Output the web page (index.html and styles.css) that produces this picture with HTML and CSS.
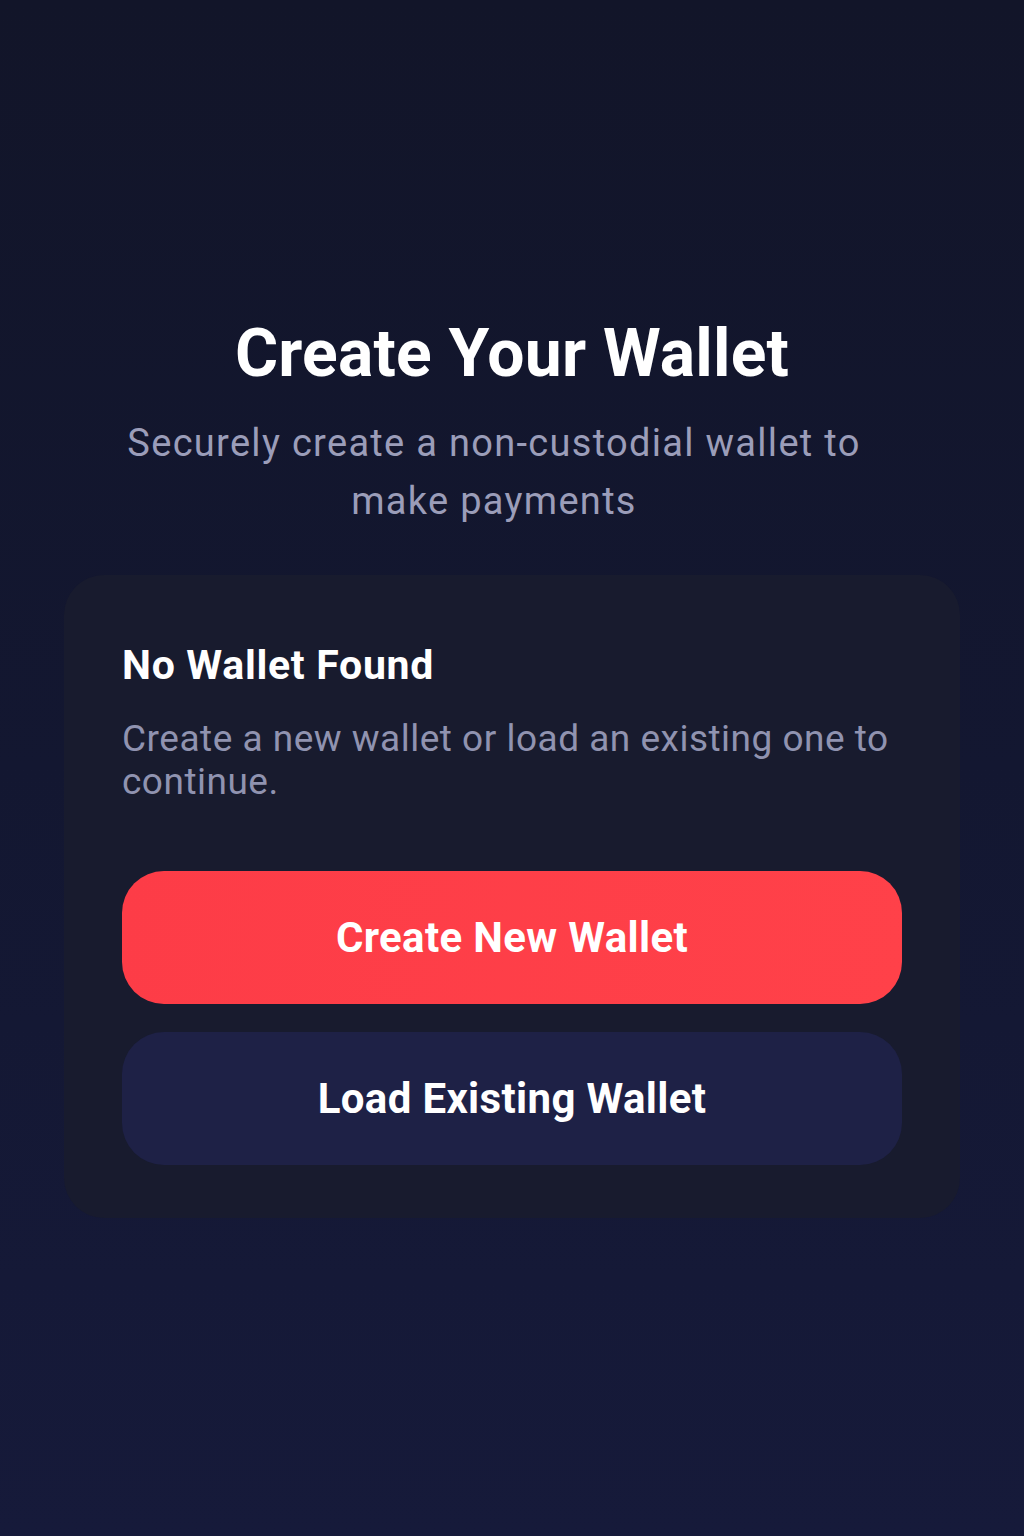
FILE: index.html
```html
<!DOCTYPE html>
<html lang="en">
<head>
<meta charset="utf-8">
<title>Create Your Wallet</title>
<link rel="stylesheet" href="styles.css">
</head>
<body>
<main class="screen">
  <header class="intro">
    <h1 class="title">Create Your Wallet</h1>
    <p class="subtitle">Securely create a non-custodial wallet to make payments</p>
  </header>
  <section class="card">
    <h2 class="card-title">No Wallet Found</h2>
    <p class="card-text">Create a new wallet or load an existing one to continue.</p>
    <div class="actions">
      <button class="btn btn-primary" type="button">Create New Wallet</button>
      <button class="btn btn-secondary" type="button">Load Existing Wallet</button>
    </div>
  </section>
</main>
</body>
</html>
```
FILE: styles.css
```css
html, body {
  margin: 0;
  padding: 0;
}
body {
  min-height: 1536px;
  background: linear-gradient(180deg, #121529 0%, #131731 50%, #161a3a 100%);
  font-family: Roboto, "Noto Sans", "Liberation Sans", sans-serif;
  color: #ffffff;
}
.screen {
  display: flex;
  flex-direction: column;
  align-items: center;
  padding: 318px 64px 0;
}
.intro {
  display: flex;
  flex-direction: column;
  align-items: center;
  text-align: center;
}
.title {
  margin: 0;
  font-size: 66px;
  font-weight: 700;
  line-height: 72px;
  letter-spacing: 0.2px;
}
.subtitle {
  box-sizing: border-box;
  width: 760px;
  margin: 24px 36px 0 0;
  font-size: 38px;
  font-weight: 400;
  line-height: 58px;
  letter-spacing: 1.3px;
  color: #9b9db9;
}
.card {
  box-sizing: border-box;
  width: 896px;
  margin-top: 45px;
  padding: 64px 58px 53px;
  background: #181b2e;
  border-radius: 40px;
}
.card-title {
  margin: 0;
  font-size: 41px;
  font-weight: 700;
  line-height: 52px;
  letter-spacing: 0.7px;
}
.card-text {
  margin: 26px 0 0;
  font-size: 37px;
  font-weight: 400;
  line-height: 43px;
  letter-spacing: 0.5px;
  color: #9093b0;
}
.actions {
  display: flex;
  flex-direction: column;
  gap: 28px;
  margin-top: 68px;
}
.btn {
  height: 133px;
  border: 0;
  border-radius: 42px;
  font-family: inherit;
  font-size: 42px;
  font-weight: 700;
  letter-spacing: 0.35px;
  color: #ffffff;
}
.btn-primary {
  background: linear-gradient(100deg, #fd3c47 0%, #ff4149 100%);
}
.btn-secondary {
  background: #1e2146;
}
```
